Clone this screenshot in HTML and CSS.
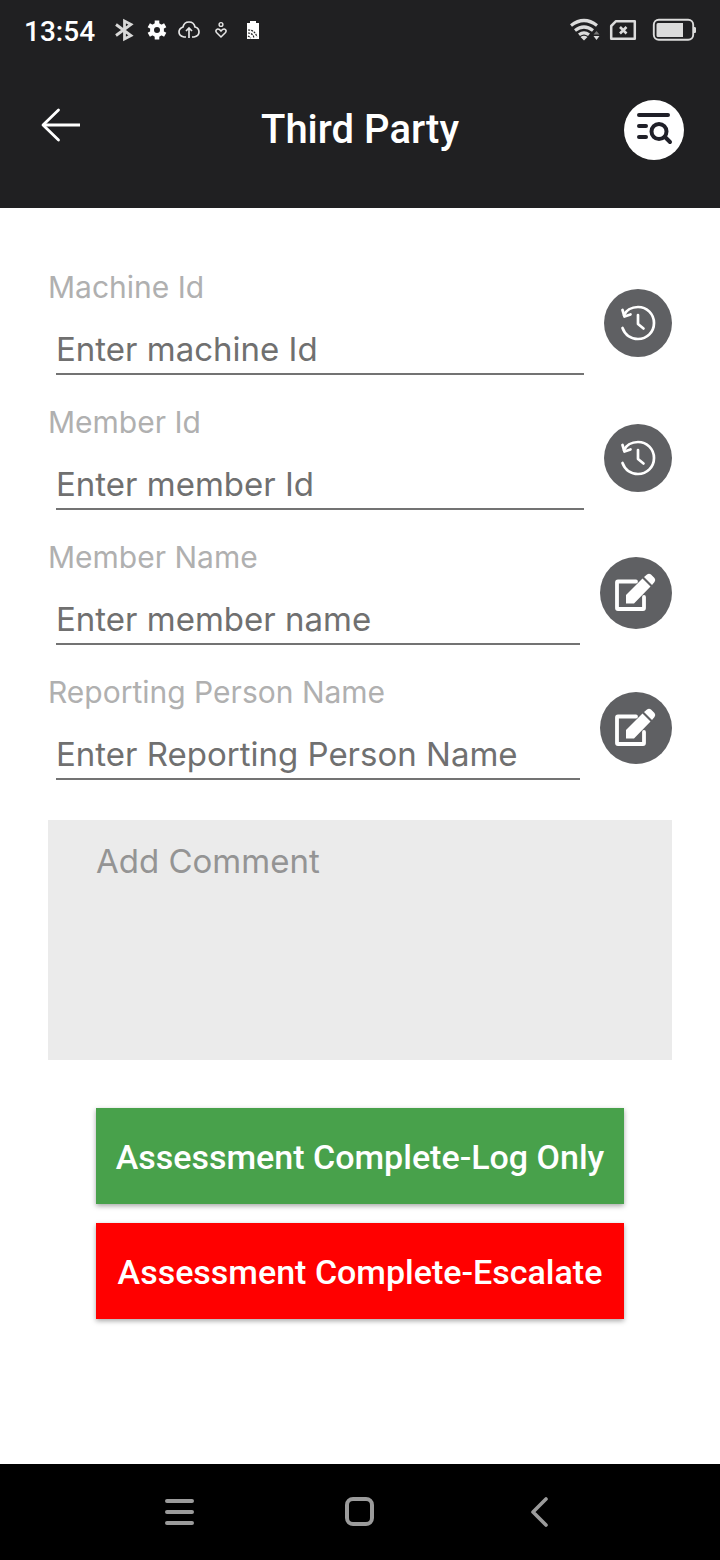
FILE: index.html
```html
<!DOCTYPE html>
<html lang="en">
<head>
<meta charset="utf-8">
<meta name="viewport" content="width=device-width, initial-scale=1">
<title>Third Party</title>
<link rel="stylesheet" href="styles.css">
</head>
<body>
<svg class="sprite" aria-hidden="true">
  <symbol id="history" viewBox="0 0 68 68">
    <path d="M18.500 39C21 46 27 50 34 50C43 50 50 43 50 34S43 18 34 18C27 18 22 22 20 26" fill="none" stroke="#fff" stroke-width="2.700" stroke-linecap="round"/>
    <path d="M18.500 21L20.500 27.500L26.500 25.500M34 26V35L39.500 39.500" fill="none" stroke="#fff" stroke-width="2.700" stroke-linecap="round" stroke-linejoin="round"/>
  </symbol>
  <symbol id="edit" viewBox="0 0 72 72">
    <path d="M36 24.500H18Q17 24.500 17 25.500V51Q17 52 18 52H43Q44 52 44 51V40" fill="none" stroke="#fff" stroke-width="3.800" stroke-linecap="round"/>
    <path d="M26 46.500V38L42.500 21.500L50.500 29.500L34 46.500ZM44 20L47 17.500Q49 16 51 17.500L54.500 21Q56 23 54.500 25L52 28Z" fill="#fff"/>
  </symbol>
</svg>
<header class="header">
  <div class="status">
    <span class="clock">13:54</span>
    <svg width="150" height="24" viewBox="112 18 150 24" fill="none" stroke="#e6e6e6" stroke-width="2" aria-hidden="true">
      <path d="M116 24.500L131 35.500L124.500 39V21L131 24.500L116 35.500" stroke="#d8d8d8" stroke-width="2.800"/>
      <circle cx="157" cy="30" r="5" stroke="#fff" stroke-width="4"/>
      <path d="M157 20.500V24M157 36V39.500M148.800 25.300L152 27.100M162 32.900L165.200 34.700M148.800 34.700L152 32.900M162 27.100L165.200 25.300" stroke="#fff" stroke-width="4.600"/>
      <path d="M186 37H184Q179 36 179 32Q179 28.500 183 27Q184 22 189 22T195 27Q199 28 199 32T194 37H192M189 38V28.500M186 31L189 28L192 31" stroke-width="1.700"/>
      <circle cx="221" cy="24.500" r="1.900" stroke-width="1.400"/>
      <path d="M221 37L216.500 32.500Q215 30.500 217 29.300Q219 28.500 221 31Q223 28.500 225 29.300Q227 30.500 225.500 32.500Z" stroke-width="1.500"/>
      <path d="M247 23H250V21H256V23H259V39H247Z" fill="#fff" stroke="none"/>
      <path d="M248 30Q255 30 257 37M248 33Q253 33 254 38M248 36L251 38" stroke="#202022" stroke-width="1.200" stroke-dasharray="2 1"/>
    </svg>
    <svg class="signals" width="128" height="24" viewBox="569 18 128 24" fill="none" stroke="#dcdcdc" aria-hidden="true">
      <path d="M571 25.500Q584 15.500 597 25.500M575 30.500Q584 23.500 593 30.500M579 34.800Q584 31 589 34.800" stroke-width="3.200"/>
      <path d="M580.500 37Q584 34.500 587.500 37L584 40.500ZM593.500 36H599.500L596.500 40Z" fill="#dcdcdc" stroke="none"/>
      <path d="M593.500 34.500L596.500 31L599.500 34.500Z" fill="#777" stroke="none"/>
      <path d="M616 21.200H634.800V38.800H611.200V26Z" stroke-width="2.500" stroke-linejoin="round"/>
      <path d="M620 27L626.500 33.500M626.500 27L620 33.500" stroke-width="2.600"/>
      <rect x="653.800" y="19.800" width="39.400" height="20" rx="5" stroke-width="1.900"/>
      <path d="M658 23H683V37H658Q656.500 37 656.500 35.500V24.500Q656.500 23 658 23ZM694 27H695Q696 27 696 28.500V31.500Q696 33 695 33H694Z" fill="#dcdcdc" stroke="none"/>
    </svg>
  </div>
  <div class="appbar">
    <button class="icon-btn back" aria-label="Back">
      <svg width="40" height="34" viewBox="0 0 40 34" fill="none" stroke="#fff" stroke-width="2.800" stroke-linecap="round" stroke-linejoin="round"><path d="M18.500 2L3 17L18.500 32"/><path d="M3 17H40" stroke-linecap="butt"/></svg>
    </button>
    <h1 class="title">Third Party</h1>
    <button class="icon-btn" aria-label="Search list">
      <svg width="60" height="60" viewBox="0 0 60 60" fill="none" stroke="#202028" stroke-width="4" stroke-linecap="round"><circle cx="30" cy="30" r="30" fill="#fff" stroke="none"/><path d="M15 15H44M15 26H22M15 37H22M41 37L46 42"/><circle cx="35" cy="31.500" r="7.500"/></svg>
    </button>
  </div>
</header>
<main class="form">
  <div class="fields">
    <div class="row">
      <div class="field"><label for="machine">Machine Id</label><input id="machine" type="text" placeholder="Enter machine Id"></div>
      <button class="round" aria-label="Machine Id history"><svg width="68" height="68"><use href="#history"/></svg></button>
    </div>
    <div class="row">
      <div class="field"><label for="member">Member Id</label><input id="member" type="text" placeholder="Enter member Id"></div>
      <button class="round" aria-label="Member Id history"><svg width="68" height="68"><use href="#history"/></svg></button>
    </div>
    <div class="row">
      <div class="field"><label for="name">Member Name</label><input id="name" type="text" placeholder="Enter member name"></div>
      <button class="round" aria-label="Edit member name"><svg width="72" height="72"><use href="#edit"/></svg></button>
    </div>
    <div class="row">
      <div class="field"><label for="reporter">Reporting Person Name</label><input id="reporter" type="text" placeholder="Enter Reporting Person Name"></div>
      <button class="round" aria-label="Edit reporting person name"><svg width="72" height="72"><use href="#edit"/></svg></button>
    </div>
  </div>
  <textarea class="comment" aria-label="Add Comment" placeholder="Add Comment"></textarea>
  <div class="actions">
    <button class="action log">Assessment Complete-Log Only</button>
    <button class="action escalate">Assessment Complete-Escalate</button>
  </div>
</main>
<nav class="navbar" aria-label="System">
  <button class="icon-btn" aria-label="Recent apps"><svg width="32" height="32" viewBox="0 0 32 32" fill="none" stroke="#9b9b9b" stroke-width="4" stroke-linecap="round"><path d="M3 5H28M3 16H28M3 27H28"/></svg></button>
  <button class="icon-btn" aria-label="Home"><svg width="32" height="32" viewBox="0 0 32 32" fill="none" stroke="#9b9b9b" stroke-width="4"><rect x="3" y="3" width="25" height="25" rx="6"/></svg></button>
  <button class="icon-btn" aria-label="Back"><svg width="32" height="32" viewBox="0 0 32 32" fill="none" stroke="#9b9b9b" stroke-width="3.600" stroke-linecap="round" stroke-linejoin="round"><path d="M21 3L8 16L21 29"/></svg></button>
</nav>
</body>
</html>
```
FILE: styles.css
```css
* { box-sizing: border-box; }
body {
  margin: 0;
  min-height: 100vh;
  display: flex;
  flex-direction: column;
  background: #fff;
  font-family: Inter, "Open Sans", sans-serif;
}
button {
  border: 0;
  padding: 0;
  background: none;
  font-family: Roboto, sans-serif;
  cursor: pointer;
}
svg { display: block; }
.sprite { display: none; }
.header {
  background: #202022;
  color: #fff;
  font-family: Roboto, sans-serif;
  padding-bottom: 48px;
}
.status {
  display: flex;
  align-items: center;
  height: 60px;
  padding: 0 23px 0 24px;
}
.clock {
  font-size: 28px;
  font-weight: 500;
  line-height: 36px;
  padding-top: 3px;
  margin-right: 17px;
}
.signals { margin-left: auto; }
.appbar {
  display: grid;
  grid-template-columns: 60px 1fr 60px;
  align-items: center;
  padding: 40px 36px 0;
}
.back { padding: 0 0 10px 4px; }
.title {
  margin: 0;
  font-size: 40px;
  font-weight: 500;
  line-height: 48px;
  text-align: center;
}
.form {
  flex: 1;
  padding: 55px 48px 48px;
}
.fields {
  display: grid;
  gap: 15px;
}
.row {
  display: flex;
  align-items: center;
  gap: 20px;
}
.field {
  flex: 1;
  min-width: 0;
  display: flex;
  flex-direction: column;
  gap: 14px;
  padding-bottom: 8px;
}
.field label {
  color: #b0b0b0;
  font-size: 30px;
  line-height: 48px;
}
.field input {
  height: 50px;
  margin-left: 8px;
  padding: 0;
  border: 0;
  border-bottom: 2px solid #737373;
  border-radius: 0;
  background: none;
  font: inherit;
  font-size: 33px;
}
.field input::placeholder {
  color: #707070;
  opacity: 1;
}
.round {
  border-radius: 50%;
  background: #5f6063;
}
.comment {
  display: block;
  width: 100%;
  height: 240px;
  margin-top: 32px;
  padding: 20px 48px;
  border: 0;
  background: #ebebeb;
  font: inherit;
  font-size: 33px;
  line-height: 42px;
  resize: none;
}
.comment::placeholder {
  color: #949494;
  opacity: 1;
}
.actions {
  display: grid;
  gap: 19px;
  padding: 48px 48px 0;
}
.action {
  min-height: 96px;
  padding-top: 2px;
  color: #fff;
  font-size: 34px;
  font-weight: 500;
  box-shadow: 0 2px 5px rgba(0, 0, 0, 0.35);
}
.log { background: #48a14b; }
.escalate { background: #f00; }
.navbar {
  display: flex;
  justify-content: space-evenly;
  align-items: center;
  height: 96px;
  padding: 0 15px;
  background: #000;
}
```
